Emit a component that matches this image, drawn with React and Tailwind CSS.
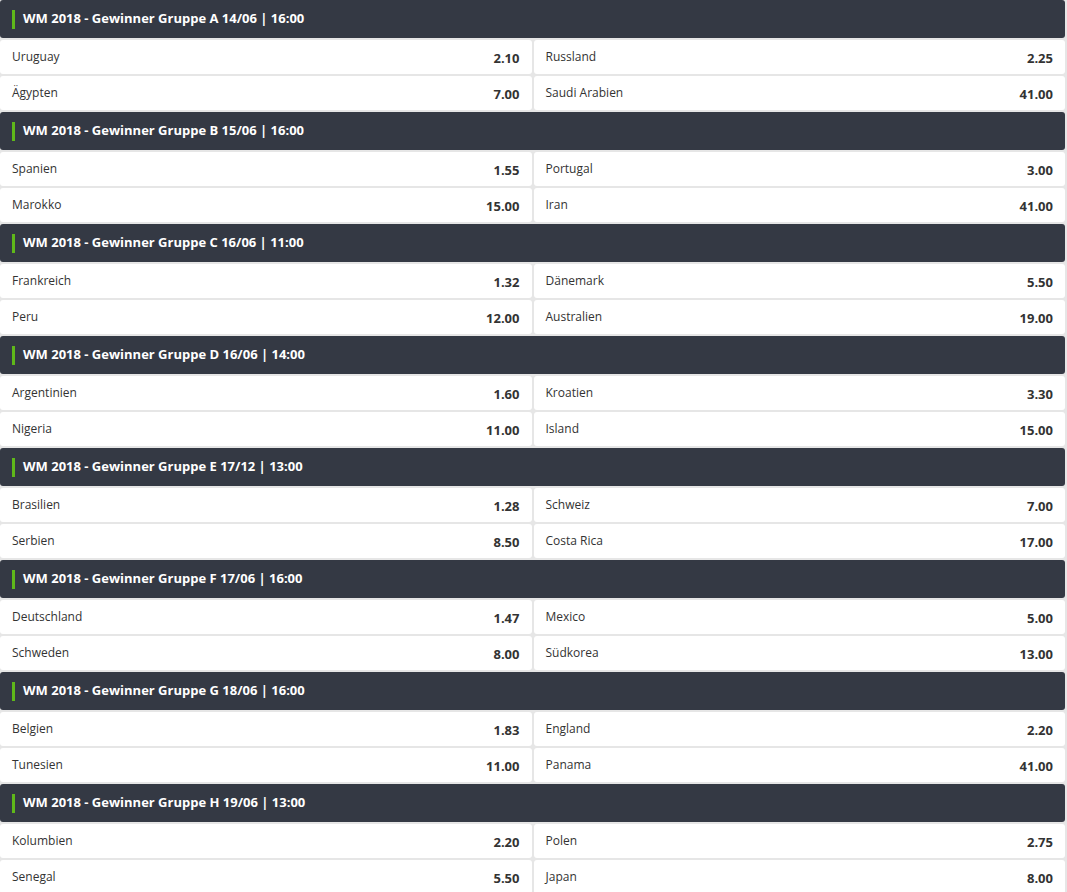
import React from 'react';

const groups = [
  { title: 'WM 2018 - Gewinner Gruppe A 14/06 | 16:00', rows: [['Uruguay', '2.10', 'Russland', '2.25'], ['Ägypten', '7.00', 'Saudi Arabien', '41.00']] },
  { title: 'WM 2018 - Gewinner Gruppe B 15/06 | 16:00', rows: [['Spanien', '1.55', 'Portugal', '3.00'], ['Marokko', '15.00', 'Iran', '41.00']] },
  { title: 'WM 2018 - Gewinner Gruppe C 16/06 | 11:00', rows: [['Frankreich', '1.32', 'Dänemark', '5.50'], ['Peru', '12.00', 'Australien', '19.00']] },
  { title: 'WM 2018 - Gewinner Gruppe D 16/06 | 14:00', rows: [['Argentinien', '1.60', 'Kroatien', '3.30'], ['Nigeria', '11.00', 'Island', '15.00']] },
  { title: 'WM 2018 - Gewinner Gruppe E 17/12 | 13:00', rows: [['Brasilien', '1.28', 'Schweiz', '7.00'], ['Serbien', '8.50', 'Costa Rica', '17.00']] },
  { title: 'WM 2018 - Gewinner Gruppe F 17/06 | 16:00', rows: [['Deutschland', '1.47', 'Mexico', '5.00'], ['Schweden', '8.00', 'Südkorea', '13.00']] },
  { title: 'WM 2018 - Gewinner Gruppe G 18/06 | 16:00', rows: [['Belgien', '1.83', 'England', '2.20'], ['Tunesien', '11.00', 'Panama', '41.00']] },
  { title: 'WM 2018 - Gewinner Gruppe H 19/06 | 13:00', rows: [['Kolumbien', '2.20', 'Polen', '2.75'], ['Senegal', '5.50', 'Japan', '8.00']] },
];

const Cell = ({ name, odd }) => (
  <div className="flex-1 flex items-center justify-between bg-white rounded-[3px] px-3 h-full">
    <span className="text-[12px] text-[#333]">{name}</span>
    <span className="text-[13px] font-bold text-[#333] pt-[3px]">{odd}</span>
  </div>
);

const App = () => {
  return (
    <div className="min-h-screen bg-[#e6e6e6] pr-[2px]" style={{ fontFamily: '"Open Sans", "Liberation Sans", sans-serif' }}>
      {groups.map((g) => (
        <div key={g.title} className="flex flex-col gap-[2px] pb-[2px]">
          {/* Group header */}
          <div className="h-[38px] bg-[#343944] rounded-[3px] flex items-center pl-3">
            <span className="w-[3px] h-[19px] bg-[#5fb81a] mr-[8px]" />
            <span className="text-white font-bold text-[13px]">{g.title}</span>
          </div>
          {g.rows.map((r, i) => (
            <div key={i} className="h-[34px] flex gap-[2px]">
              <Cell name={r[0]} odd={r[1]} />
              <Cell name={r[2]} odd={r[3]} />
            </div>
          ))}
        </div>
      ))}
    </div>
  );
};

export default App;
